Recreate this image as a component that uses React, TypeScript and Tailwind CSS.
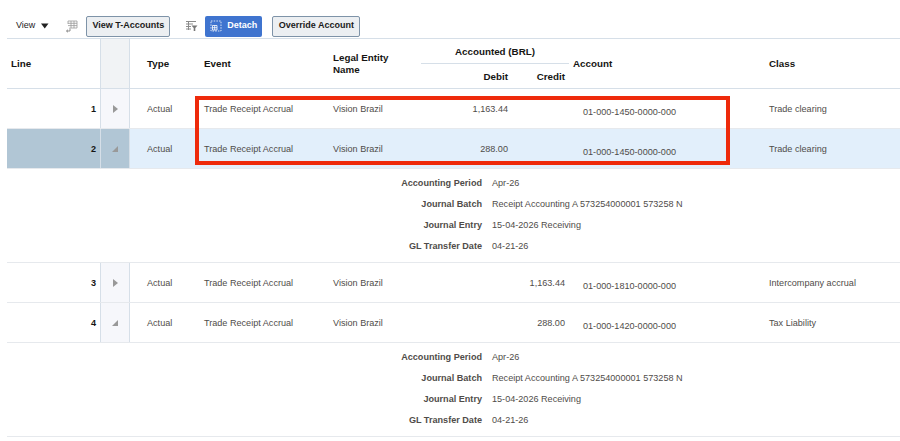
import React from "react"

const gridCols = "grid grid-cols-[94px_29px_67px_130px_94px_91px_57px_194px_130px]"

interface LineRow {
    line: number
    debit: string
    credit: string
    account: string
    lineClass: string
    expanded: boolean
    selected?: boolean
}

const rows: LineRow[] = [
    { line: 1, debit: "1,163.44", credit: "", account: "01-000-1450-0000-000", lineClass: "Trade clearing", expanded: false },
    { line: 2, debit: "288.00", credit: "", account: "01-000-1450-0000-000", lineClass: "Trade clearing", expanded: true, selected: true },
    { line: 3, debit: "", credit: "1,163.44", account: "01-000-1810-0000-000", lineClass: "Intercompany accrual", expanded: false },
    { line: 4, debit: "", credit: "288.00", account: "01-000-1420-0000-000", lineClass: "Tax Liability", expanded: true },
]

const details = [
    ["Accounting Period", "Apr-26"],
    ["Journal Batch", "Receipt Accounting A 573254000001 573258 N"],
    ["Journal Entry", "15-04-2026 Receiving"],
    ["GL Transfer Date", "04-21-26"],
]

const Toolbar = () => (
    <div className="flex items-center h-[24px] mt-[14px] text-[#1b1b1b]">
        <span className="ml-[16px] text-[9px]">View</span>
        <svg width="8" height="6" viewBox="0 0 8 6" className="ml-[6px]">
            <path d="M0 0.5h7.5L3.75 5.5z" fill="#222" />
        </svg>
        <svg width="13" height="13" viewBox="0 0 13 13" className="ml-[16px]" fill="none" stroke="#999" strokeWidth="0.8">
            <path d="M3 1h9v7H6M3 1v3M3 3.3h9M3 5.6h9M6 1v7M9 1v7" />
            <path d="M5 7.5v3.5H1.5M1.5 11l1.5-1.3M1.5 11l1.5 1.3" stroke="#777" />
        </svg>
        <button className="ml-[8px] h-[21px] w-[84px] rounded-[2px] border border-[#7e93a8] bg-[#eceff2] text-[9px] font-bold">
            View T-Accounts
        </button>
        <svg width="13" height="12" viewBox="0 0 13 12" className="ml-[15px]" fill="none">
            <path d="M1 1.5h10M1 4h7M1 6.5h5M1 9h5M3.5 1.5V10" stroke="#8b8b8b" strokeWidth="1" />
            <path d="M6.5 5.5h6L10.3 8v3H8.7V8z" fill="#777" />
        </svg>
        <button className="ml-[7px] flex h-[21px] w-[57px] items-center rounded-[2px] bg-[#3f74cf] pl-[5px] text-[9px] font-bold text-white">
            <svg width="12" height="12" viewBox="0 0 12 12" fill="none" stroke="#fff" strokeWidth="0.8">
                <path d="M1 1h10v10H1z" strokeDasharray="1.5 1.2" />
                <path d="M2.5 5.5h4.5v4.5H2.5zM2.5 7.7h4.5M4.7 5.5v4.5" />
            </svg>
            <span className="ml-[5px]">Detach</span>
        </button>
        <button className="ml-[10px] h-[21px] w-[88px] rounded-[2px] border border-[#7e93a8] bg-[#eceff2] text-[9px] font-bold">
            Override Account
        </button>
    </div>
)

const Header = () => (
    <div className={`${gridCols} h-[51px] border-y border-[#d6dfe8] text-[9.8px] font-bold text-[#161513]`}>
        <div className="flex items-center pl-[4px] pt-[1px] border-r border-[#d6dfe8]">Line</div>
        <div className="border-r border-[#d6dfe8] bg-[#f1f3f5]" />
        <div className="flex items-center pl-[17px] pt-[1px]">Type</div>
        <div className="flex items-center pl-[7px] pt-[1px]">Event</div>
        <div className="flex items-center pl-[6px] leading-[12px]">
            Legal Entity
            <br />
            Name
        </div>
        <div className="col-span-2 flex flex-col">
            <div className="flex h-[25px] items-center justify-center border-b border-[#d6dfe8] pt-[2px]">
                Accounted (BRL)
            </div>
            <div className="flex flex-1 pt-[2px]">
                <div className="flex w-[91px] items-center justify-end pr-[4px]">Debit</div>
                <div className="flex w-[57px] items-center justify-end pr-[4px]">Credit</div>
            </div>
        </div>
        <div className="flex items-center pl-[4px] pt-[1px]">Account</div>
        <div className="flex items-center pl-[6px] pt-[1px]">Class</div>
    </div>
)

const Row = ({ row }: { row: LineRow }) => (
    <div className={`${gridCols} h-[40px] border-b border-[#e6e9ed] text-[9.1px] text-[#4f4c49] ${row.selected ? "bg-[#e2effb]" : ""}`}>
        <div className={`flex items-center justify-end pr-[4px] pt-[2px] border-r border-[#d6dfe8] font-bold text-[#161513] ${row.selected ? "bg-[#b1c6d5]" : ""}`}>
            {row.line}
        </div>
        <div className={`flex items-center justify-center border-r border-[#d6dfe8] ${row.selected ? "bg-[#b1c6d5]" : "bg-[#f6f7fb]"}`}>
            {row.expanded ? (
                <svg width="6" height="6" viewBox="0 0 6 6">
                    <path d="M6 0v6H0z" fill="#999" />
                </svg>
            ) : (
                <svg width="5" height="8" viewBox="0 0 5 8">
                    <path d="M0 0l5 4-5 4z" fill="#999" />
                </svg>
            )}
        </div>
        <div className="flex items-center pl-[17px] pt-[2px]">Actual</div>
        <div className="flex items-center pl-[7px] pt-[2px]">Trade Receipt Accrual</div>
        <div className="flex items-center pl-[6px] pt-[2px]">Vision Brazil</div>
        <div className="flex items-center justify-end pr-[4px] pt-[2px]">{row.debit}</div>
        <div className="flex items-center justify-end pr-[4px] pt-[2px]">{row.credit}</div>
        <div className="flex items-center pl-[14px] pt-[9px]">{row.account}</div>
        <div className="flex items-center pl-[6px] pt-[2px]">{row.lineClass}</div>
    </div>
)

const Detail = () => (
    <div className="flex h-[94px] flex-col gap-[7px] border-b border-[#e6e9ed] pt-[8px] text-[9.1px]">
        {details.map(([label, value]) => (
            <div key={label} className="flex h-[14px] items-center">
                <div className="w-[475px] text-right font-bold text-[#4f4c49]">{label}</div>
                <div className="ml-[10px] text-[#4f4c49]">{value}</div>
            </div>
        ))}
    </div>
)

export default function App() {
    return (
        <div className="relative h-[441px] w-[900px] overflow-hidden bg-white font-['Liberation_Sans',Arial,sans-serif]">
            <Toolbar />
            <div className="ml-[7px]">
                <Header />
                {rows.map((row) => (
                    <React.Fragment key={row.line}>
                        <Row row={row} />
                        {row.expanded && <Detail />}
                    </React.Fragment>
                ))}
            </div>
            {/* annotation drawn on top of the screenshot */}
            <div className="absolute left-[195px] top-[96px] h-[69px] w-[535px] border-[4px] border-[#ee2a0b]" />
        </div>
    )
}
